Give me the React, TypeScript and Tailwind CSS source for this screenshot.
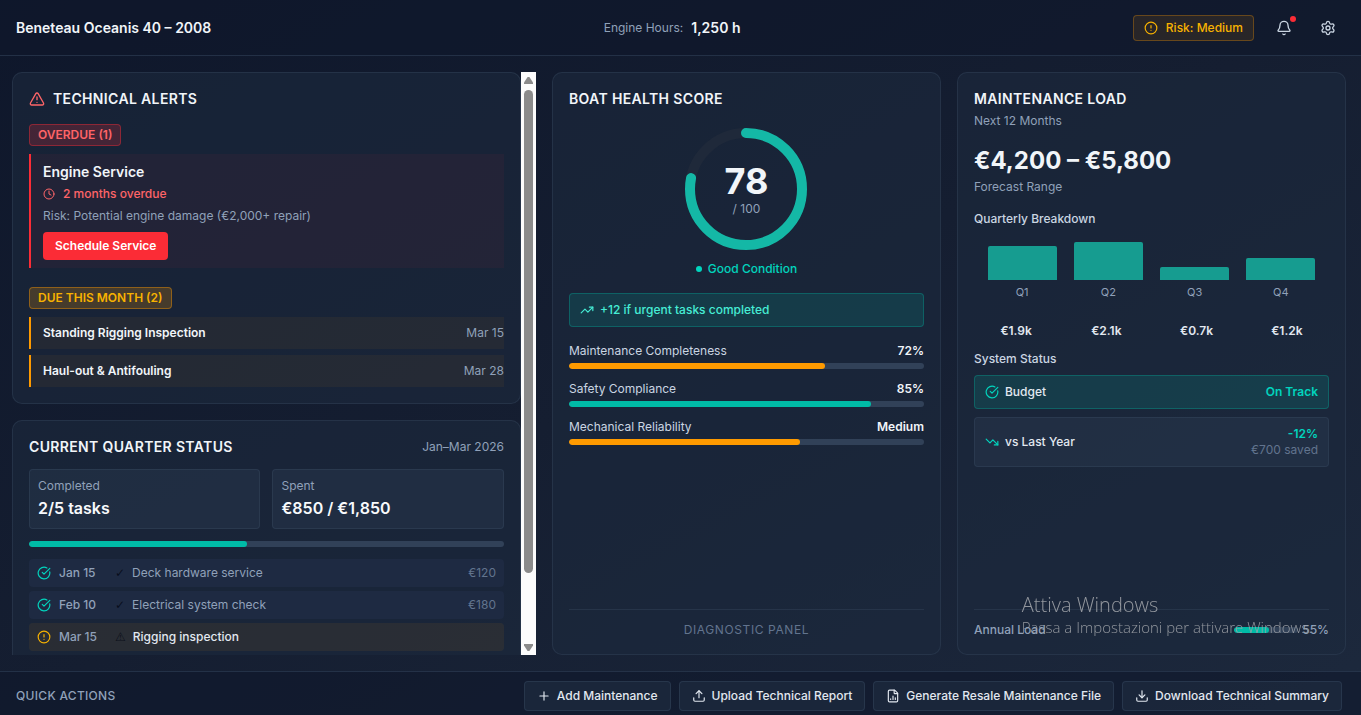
import type { ReactNode } from 'react';
import {
  Bell,
  CircleAlert,
  CircleCheckBig,
  Clock,
  Download,
  FileChartColumn,
  Plus,
  Settings,
  TrendingDown,
  TrendingUp,
  TriangleAlert,
  Upload,
} from 'lucide-react';

const DUE = [
  { name: 'Standing Rigging Inspection', date: 'Mar 15' },
  { name: 'Haul-out & Antifouling', date: 'Mar 28' },
];

const TASKS = [
  { date: 'Jan 15', name: 'Deck hardware service', cost: '€120', done: true },
  { date: 'Feb 10', name: 'Electrical system check', cost: '€180', done: true },
  { date: 'Mar 15', name: 'Rigging inspection', cost: '', done: false },
];

const METRICS = [
  { label: 'Maintenance Completeness', text: '72%', value: 72, color: 'bg-amber-500' },
  { label: 'Safety Compliance', text: '85%', value: 85, color: 'bg-teal-500' },
  { label: 'Mechanical Reliability', text: 'Medium', value: 65, color: 'bg-amber-500' },
];

const QUARTERS = [
  { q: 'Q1', cost: 1.9 },
  { q: 'Q2', cost: 2.1 },
  { q: 'Q3', cost: 0.7 },
  { q: 'Q4', cost: 1.2 },
];
const MAX_COST = Math.max(...QUARTERS.map((x) => x.cost));

const ACTIONS = [
  { label: 'Add Maintenance', icon: Plus },
  { label: 'Upload Technical Report', icon: Upload },
  { label: 'Generate Resale Maintenance File', icon: FileChartColumn },
  { label: 'Download Technical Summary', icon: Download },
];

function Card({ children, className = '' }: { children: ReactNode; className?: string }) {
  return (
    <section className={`rounded-[10px] border border-slate-700/50 bg-slate-800/60 p-4 ${className}`}>
      {children}
    </section>
  );
}

function CardTitle({ children }: { children: ReactNode }) {
  return (
    <h2 className="text-sm leading-5 font-semibold tracking-wide text-slate-100">{children}</h2>
  );
}

function Bar({ value, color }: { value: number; color: string }) {
  return (
    <div className="h-1.5 w-full overflow-hidden rounded-full bg-slate-700">
      <div className={`h-full rounded-full ${color}`} style={{ width: `${value}%` }} />
    </div>
  );
}

function ScrollBar() {
  return (
    <div aria-hidden className="flex w-[15px] shrink-0 flex-col items-center bg-[#fcfcfc]">
      <svg width="9" height="18" viewBox="0 0 9 18" fill="#8b8b8b">
        <path d="M3.6 5h1.8L9 10.6V12H0v-1.4Z" />
      </svg>
      <div className="w-[9px] grow-[483] rounded-full bg-[#8b8b8b]" />
      <div className="grow-[64]" />
      <svg width="9" height="18" viewBox="0 0 9 18" fill="#8b8b8b">
        <path d="M3.6 14h1.8L9 8.4V7H0v1.4Z" />
      </svg>
    </div>
  );
}

function Header() {
  return (
    <header className="flex h-14 shrink-0 items-center justify-between border-b border-slate-700/60 bg-slate-900/60 pr-[19px] pl-4">
      <h1 className="text-sm font-semibold text-slate-100">Beneteau Oceanis 40 – 2008</h1>
      <div className="flex items-center gap-2">
        <span className="text-slate-400">Engine Hours:</span>
        <span className="text-sm font-semibold text-slate-100">1,250 h</span>
      </div>
      <div className="flex items-center gap-4">
        <div className="flex items-center gap-2 rounded border border-amber-500/30 bg-amber-500/10 px-2.5 py-1 leading-4 font-medium text-[#f8b200]">
          <CircleAlert size={14} />
          Risk: Medium
        </div>
        <button aria-label="Notifications" className="relative rounded p-1.5 text-slate-300">
          <Bell size={16} />
          <span className="absolute top-0.5 right-0.5 size-1.5 rounded-full bg-red-500" />
        </button>
        <button aria-label="Settings" className="rounded p-1.5 text-slate-300">
          <Settings size={16} />
        </button>
      </div>
    </header>
  );
}

function TechnicalAlerts() {
  return (
    <Card>
      <div className="mb-[15px] flex items-center gap-2">
        <TriangleAlert size={16} className="text-red-400" />
        <CardTitle>TECHNICAL ALERTS</CardTitle>
      </div>

      <div className="flex">
        <span className="rounded border border-red-500/40 bg-red-500/20 px-2 py-0.5 leading-4 font-semibold text-red-400">
          OVERDUE (1)
        </span>
      </div>
      <div className="mt-2 flex flex-col items-start gap-0.5 border-l-2 border-red-500 bg-red-500/5 py-2 pl-3">
        <h3 className="text-sm leading-5 font-semibold text-slate-100">Engine Service</h3>
        <p className="flex items-center gap-2 font-medium text-red-400">
          <Clock size={12} />
          2 months overdue
        </p>
        <p className="text-slate-400">Risk: Potential engine damage (€2,000+ repair)</p>
        <button className="mt-1 rounded bg-red-500 px-3 py-1 font-semibold text-white">
          Schedule Service
        </button>
      </div>

      <div className="mt-[19px] flex">
        <span className="rounded border border-amber-500/40 bg-amber-500/20 px-2 py-0.5 leading-4 font-semibold text-[#f8b200]">
          DUE THIS MONTH (2)
        </span>
      </div>
      <ul className="mt-2 flex flex-col gap-1.5">
        {DUE.map((d) => (
          <li
            key={d.name}
            className="flex items-center justify-between border-l-2 border-amber-500 bg-amber-500/5 py-1.5 pl-3"
          >
            <span className="font-semibold text-slate-100">{d.name}</span>
            <span className="text-slate-400">{d.date}</span>
          </li>
        ))}
      </ul>
    </Card>
  );
}

function Stat({ label, value }: { label: string; value: string }) {
  return (
    <div className="rounded border border-slate-700/60 bg-slate-700/30 p-2">
      <div className="leading-4 text-slate-400">{label}</div>
      <div className="mt-0.5 text-base leading-6 font-semibold text-slate-50">{value}</div>
    </div>
  );
}

function QuarterStatus() {
  return (
    <Card>
      <div className="mb-3 flex items-center justify-between">
        <CardTitle>CURRENT QUARTER STATUS</CardTitle>
        <span className="text-slate-400">Jan–Mar 2026</span>
      </div>
      <div className="mb-3 grid grid-cols-2 gap-3">
        <Stat label="Completed" value="2/5 tasks" />
        <Stat label="Spent" value="€850 / €1,850" />
      </div>
      <Bar value={46} color="bg-teal-500" />
      <ul className="mt-3 flex flex-col gap-1">
        {TASKS.map((t) => (
          <li
            key={t.name}
            className={`flex items-center gap-2 rounded px-2 py-1 ${t.done ? 'bg-[#1e2a42]' : 'bg-amber-500/7'}`}
          >
            {t.done ? (
              <CircleCheckBig size={14} className="text-teal-400" />
            ) : (
              <CircleAlert size={14} className="text-[#f8b200]" />
            )}
            <span className="w-12 font-medium text-slate-400">{t.date}</span>
            <span
              className={`flex flex-1 gap-[7px] ${t.done ? 'text-slate-400' : 'font-medium text-slate-200'}`}
            >
              <span className="font-['DejaVu_Sans',sans-serif] font-normal text-gray-950/80">
                {t.done ? '✓' : '⚠'}
              </span>
              {t.name}
            </span>
            <span className="text-slate-500">{t.cost}</span>
          </li>
        ))}
      </ul>
    </Card>
  );
}

function HealthScore() {
  const r = 56;
  const length = 2 * Math.PI * r;
  return (
    <Card className="flex flex-col">
      <CardTitle>BOAT HEALTH SCORE</CardTitle>
      <div className="relative mx-auto mt-4 size-32">
        <svg viewBox="0 0 128 128" fill="none" strokeWidth="10" className="size-full -rotate-90">
          <circle cx="64" cy="64" r={r} stroke="#1f293a" />
          <circle
            cx="64"
            cy="64"
            r={r}
            stroke="#14b8a6"
            strokeLinecap="round"
            strokeDasharray={`${length * 0.78} ${length}`}
          />
        </svg>
        <div className="absolute inset-0 flex flex-col items-center justify-center">
          <span className="text-4xl leading-10 font-bold text-slate-100">78</span>
          <span className="leading-4 text-slate-400">/ 100</span>
        </div>
      </div>
      <div className="mt-1.5 flex items-center justify-center gap-1.5 font-medium text-teal-400">
        <span className="size-1.5 rounded-full bg-teal-400" />
        Good Condition
      </div>
      <div className="mt-3.5 flex items-center gap-1.5 rounded border border-teal-500/30 bg-teal-500/15 px-2.5 py-2 leading-4 font-medium text-teal-300">
        <TrendingUp size={14} />
        +12 if urgent tasks completed
      </div>
      <div className="mt-3.5 flex flex-col gap-2.5">
        {METRICS.map((m) => (
          <div key={m.label} className="flex flex-col gap-0.5">
            <div className="flex justify-between">
              <span className="text-slate-300">{m.label}</span>
              <span className="font-semibold text-slate-100">{m.text}</span>
            </div>
            <Bar value={m.value} color={m.color} />
          </div>
        ))}
      </div>
      <div className="mt-auto border-t border-slate-700/50 pt-3 text-center leading-4 tracking-wider text-slate-500">
        DIAGNOSTIC PANEL
      </div>
    </Card>
  );
}

function MaintenanceLoad() {
  return (
    <Card className="flex flex-col">
      <CardTitle>MAINTENANCE LOAD</CardTitle>
      <p className="mt-0.5 text-slate-400">Next 12 Months</p>
      <p className="mt-3.5 text-2xl leading-8 font-bold text-slate-100">€4,200 – €5,800</p>
      <p className="text-slate-400">Forecast Range</p>

      <h3 className="mt-3 font-medium text-slate-300">Quarterly Breakdown</h3>
      <div className="mt-[13px] flex h-[38px] items-end px-[5px]">
        {QUARTERS.map((x) => (
          <div key={x.q} className="flex h-full flex-1 items-end justify-center">
            <div
              className="w-4/5 rounded-t-[2px] bg-[#169c90]"
              style={{ height: `${(x.cost / MAX_COST) * 100}%` }}
            />
          </div>
        ))}
      </div>
      <div className="mt-1 flex px-[5px] text-center text-[11px] leading-4 text-slate-400">
        {QUARTERS.map((x) => (
          <span key={x.q} className="flex-1">
            {x.q}
          </span>
        ))}
      </div>
      <div className="mt-[21px] grid grid-cols-4 gap-1.5 text-center font-semibold text-slate-200">
        {QUARTERS.map((x) => (
          <span key={x.q}>€{x.cost}k</span>
        ))}
      </div>

      <h3 className="mt-2 font-medium text-slate-300">System Status</h3>
      <div className="mt-1.5 flex items-center justify-between rounded border border-teal-500/30 bg-teal-500/15 px-2.5 py-2 leading-4">
        <span className="flex items-center gap-1.5 font-medium text-slate-200">
          <CircleCheckBig size={14} className="text-teal-400" />
          Budget
        </span>
        <span className="font-semibold text-teal-400">On Track</span>
      </div>
      <div className="mt-2 flex items-center justify-between rounded border border-slate-700/60 bg-slate-700/30 px-2.5 py-2 leading-4">
        <span className="flex items-center gap-1.5 font-medium text-slate-200">
          <TrendingDown size={14} className="text-teal-400" />
          vs Last Year
        </span>
        <span className="flex flex-col text-right">
          <span className="font-semibold text-teal-400">-12%</span>
          <span className="text-slate-500">€700 saved</span>
        </span>
      </div>

      <div className="mt-auto flex items-center justify-between border-t border-slate-700/50 pt-3 leading-4 font-medium text-slate-400">
        <span>Annual Load</span>
        <span className="flex items-center gap-1">
          <span className="block w-16">
            <Bar value={55} color="bg-teal-500" />
          </span>
          55%
        </span>
      </div>
    </Card>
  );
}

export default function App() {
  return (
    <div className="flex h-screen flex-col overflow-hidden bg-linear-to-br from-slate-900 via-[#151e31] to-slate-800 font-[Inter,sans-serif] text-xs leading-5">
      <Header />
      <main className="grid min-h-0 flex-1 grid-cols-[1.347fr_1fr_1fr] grid-rows-[minmax(0,1fr)] gap-4 py-4 pr-[15px] pl-3">
        <div className="flex min-h-0">
          <div className="flex min-w-0 flex-1 flex-col gap-4 overflow-y-auto [scrollbar-width:none]">
            <TechnicalAlerts />
            <QuarterStatus />
          </div>
          <ScrollBar />
        </div>
        <HealthScore />
        <MaintenanceLoad />
      </main>
      <footer className="flex shrink-0 items-center justify-between border-t border-slate-700/60 bg-slate-900/60 pt-[9px] pr-[19px] pb-1 pl-4">
        <span className="font-medium tracking-wide text-slate-400">QUICK ACTIONS</span>
        <div className="flex gap-2">
          {ACTIONS.map(({ label, icon: Icon }) => (
            <button
              key={label}
              className="flex items-center gap-1.5 rounded border border-slate-700/60 bg-slate-800/80 px-3 py-1 font-medium text-slate-200"
            >
              <Icon size={14} />
              {label}
            </button>
          ))}
        </div>
      </footer>

      {/* desktop activation notice floats over the page */}
      <div className="pointer-events-none fixed right-[49px] bottom-[78px] font-['Open_Sans',sans-serif] font-light text-[#a0a3a9]/90">
        <div className="text-xl leading-6">Attiva Windows</div>
        <div className="text-[15px] leading-5">Passa a Impostazioni per attivare Windows.</div>
      </div>
    </div>
  );
}
